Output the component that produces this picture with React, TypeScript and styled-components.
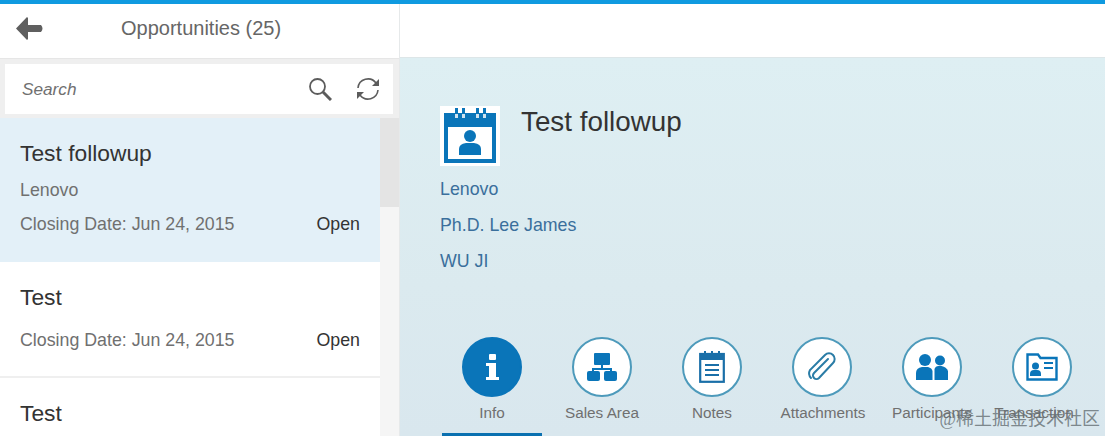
import React from "react";
import styled, { createGlobalStyle } from "styled-components";

const Global = createGlobalStyle`
  html, body { margin: 0; padding: 0; background: #fff; overflow: hidden; }
  body { font-family: "Liberation Sans", Arial, sans-serif; }
`;
const Page = styled.div`
  position: relative; width: 1105px; height: 436px; overflow: hidden;
  border-top: 4px solid #0f9ae0; box-sizing: border-box;
  display: grid; grid-template-columns: 400px 1fr;
`;
const Left = styled.aside`
  display: flex; flex-direction: column; border-right: 1px solid #e6e9ea; box-sizing: border-box; min-height: 0;
  overflow: hidden; background: #fff;
`;
const Header = styled.header`
  height: 54px; flex: none; display: flex; align-items: center; box-sizing: border-box; padding: 0 0 5px 15px;
`;
const Title = styled.h1`
  margin: 0 0 0 77px; font-size: 20px; font-weight: 400; color: #666;
`;
const SearchWrap = styled.div`
  flex: none; height: 60px; padding: 5px 6px 4px 5px; box-sizing: border-box; background: #efefef;
  border-top: 1px solid #e6e6e6;
`;
const SearchBox = styled.div`
  height: 50px; background: #fff; display: flex; align-items: center; padding: 0 12px 0 17px; box-sizing: border-box; gap: 23px;
`;
const Placeholder = styled.span`
  font-size: 17.2px; font-style: italic; color: #707070; flex: 1;
`;
const ListArea = styled.div`
  flex: 1; display: grid; grid-template-columns: 380px 19px; min-height: 0;
`;
const List = styled.div`display: flex; flex-direction: column;`;
const Track = styled.div`background: #f5f5f5;`;
const Thumb = styled.div`height: 89px; background: #e4e4e4;`;
const Item = styled.div<{ $active?: boolean; $h: number }>`
  height: ${p => p.$h}px; flex: none; box-sizing: border-box; padding: 20px 20px 0;
  background: ${p => (p.$active ? "#e3f0f8" : "#fff")};
  border-bottom: 2px solid ${p => (p.$active ? "#e3f0f8" : "#efefef")};
`;
const ItemTitle = styled.div`font-size: 22.8px; line-height: 30px; color: #333;`;
const Sub = styled.div`font-size: 17.8px; line-height: 20px; color: #707070; margin-top: 12px;`;
const Row = styled.div<{ $mt: number }>`
  display: flex; justify-content: space-between; font-size: 17.8px; line-height: 20px; color: #707070; margin-top: ${p => p.$mt}px;
`;
const Status = styled.span`color: #333;`;
const Right = styled.main`display: flex; flex-direction: column; min-height: 0;`;
const RightTop = styled.div`height: 54px; flex: none; background: #fff; border-bottom: 1px solid #dde6e8; box-sizing: border-box;`;
const Detail = styled.div`
  flex: 1; background: linear-gradient(180deg, #deeff3 0%, #dbeaef 60%, #d9e7ee 100%);
  padding: 48px 0 0 40px; box-sizing: border-box; display: flex; flex-direction: column; min-height: 0;
`;
const Head = styled.div`display: flex; gap: 21px; height: 60px;`;
const Logo = styled.div`
  width: 60px; height: 60px; background: #fff; display: flex; align-items: center; justify-content: center; flex: none;
`;
const DetailTitle = styled.h2`margin: -1px 0 0; font-size: 27.8px; line-height: 34px; font-weight: 400; color: #333;`;
const Links = styled.div`display: flex; flex-direction: column; gap: 16px; margin-top: 13px;`;
const LinkText = styled.a`font-size: 17.8px; line-height: 20px; color: #3a6f9c; text-decoration: none;`;
const Tabs = styled.nav`display: flex; margin: 66px 0 0 2px;`;
const Tab = styled.div<{ $active?: boolean }>`
  width: 110px; flex: none; display: flex; flex-direction: column; align-items: center; height: 99px; box-sizing: border-box;
  position: relative;
  ${p => p.$active ? "&::after{content:'';position:absolute;left:0;width:100px;bottom:0;height:3px;background:#0a70b0;}" : ""}
`;
const Circle = styled.div<{ $active?: boolean }>`
  width: 60px; height: 60px; border-radius: 50%; box-sizing: border-box; margin-left: -10px;
  display: flex; align-items: center; justify-content: center;
  background: ${p => (p.$active ? "#0a75b9" : "#fff")};
  border: 2px solid ${p => (p.$active ? "#0a75b9" : "#4d9abb")};
`;
const TabLabel = styled.span<{ $dx: number }>`
  font-size: 15.3px; line-height: 18px; margin: 7px 0 0 ${p => p.$dx}px; color: #707070; white-space: nowrap;
`;
const Watermark = styled.div`
  position: absolute; right: 5px; bottom: 6px; font-size: 18px; line-height: 22px; color: rgba(100,110,115,.8);
  font-family: "Liberation Serif", "Noto Sans CJK SC", serif; white-space: nowrap;
`;

const B = "#0a75b9";

const Back = () => (
  <svg width="29" height="23" viewBox="0 0 29 23"><path d="M12 0 L1 11.5 L12 23 L13 22 L13 15 L26 15 Q29 11.5 26 8 L13 8 L13 1 Z" fill="#5f5f5f" /></svg>
);
const Search = () => (
  <svg width="24" height="24" viewBox="0 0 24 24" fill="none" stroke="#5c5c5c"><circle cx="9.5" cy="9.5" r="7.5" strokeWidth="1.8" /><path d="M15 15 L23 23" strokeWidth="3" /></svg>
);
const Refresh = () => (
  <svg width="26" height="24" viewBox="0 0 26 24" fill="none" stroke="#5c5c5c" strokeWidth="1.6">
    <path d="M3 11 A10 10 0 0 1 21 6" /><path d="M23 13 A10 10 0 0 1 5 18" />
    <path d="M24 2 L24 9 L17 9 Z" fill="#5c5c5c" stroke="none" /><path d="M2 22 L2 15 L9 15 Z" fill="#5c5c5c" stroke="none" />
  </svg>
);
const CalendarPerson = () => (
  <svg width="52" height="56" viewBox="0 0 52 56">
    <rect x="0" y="5" width="52" height="50" fill={B} /><rect x="4" y="19" width="44" height="32" fill="#fff" />
    <path d="M11 0h3v10h-3zM18 0h3v10h-3zM32 0h3v10h-3zM39 0h3v10h-3z" fill={B} /><path d="M11 6h3v4h-3zM18 6h3v4h-3zM32 6h3v4h-3zM39 6h3v4h-3z" fill="#cfe3f0" />
    <circle cx="26" cy="28" r="6" fill={B} /><path d="M15 47 v-6 q0-5 7-6 h8 q7 1 7 6 v6 z" fill={B} />
  </svg>
);
const InfoIcon = () => (
  <svg width="14" height="26" viewBox="0 0 14 26" fill="#fff"><rect x="4" y="0" width="7" height="6" rx="1" /><path d="M1 9h10v14h3v3H1v-3h3V12H1z" /></svg>
);
const SalesIcon = () => (
  <svg width="30" height="28" viewBox="0 0 30 28" fill={B}>
    <rect x="7" y="0" width="16" height="12" rx="1" /><path d="M14 12h2v3h9v4h-2v-2H7v2H5v-4h9z" />
    <rect x="0" y="18" width="13" height="10" rx="2" /><rect x="17" y="18" width="13" height="10" rx="2" />
  </svg>
);
const NotesIcon = () => (
  <svg width="26" height="32" viewBox="0 0 26 32" fill="none">
    <rect x="1.2" y="3" width="23.6" height="27.8" stroke="#1a6fa8" strokeWidth="2.2" fill="#fff" /><rect x="1" y="3" width="24" height="6" fill="#1a6fa8" />
    <path d="M6 0v5M13 0v5M20 0v5" stroke="#1a6fa8" strokeWidth="2" /><path d="M6 14h14M6 19h14M6 24h14" stroke="#1a6fa8" strokeWidth="2" />
  </svg>
);
const ClipIcon = () => (
  <svg width="32" height="32" viewBox="0 0 32 32" fill="none" stroke="#2a7ca6" strokeWidth="2" strokeLinecap="round">
    <path d="M22 8 L8 22 a3.5 3.5 0 0 0 5 5 L27 12 a5.5 5.5 0 0 0-8-8 L4 19 a7 7 0 0 0 1 8" />
  </svg>
);
const PeopleIcon = () => (
  <svg width="32" height="26" viewBox="0 0 32 26" fill={B}>
    <circle cx="9" cy="6" r="6" /><path d="M0 26 v-7 q0-5 6-6 h6 q4 1 4.5 4 v9 z" />
    <circle cx="24" cy="6.5" r="5" /><path d="M18.5 26 V15 q1-3 4-3 h3 q5 1 6.5 5 v9 z" />
  </svg>
);
const CardIcon = () => (
  <svg width="32" height="28" viewBox="0 0 32 28" fill="none">
    <path d="M1.5 4 V1.5 H12 L14.5 5 H30.5 V26.5 H1.5 Z" stroke={B} strokeWidth="2.4" fill="#fff" />
    <circle cx="9.5" cy="13" r="3.5" fill={B} /><path d="M4 23 v-2 q0-4 4-4 h3 q4 0 4 4 v2 z" fill={B} />
    <path d="M18 10h9M18 15h9" stroke={B} strokeWidth="2" />
  </svg>
);

const tabs = [
  { label: "Info", icon: <InfoIcon />, active: true, dx: -10 },
  { label: "Sales Area", icon: <SalesIcon />, dx: -10 },
  { label: "Notes", icon: <NotesIcon />, dx: -10 },
  { label: "Attachments", icon: <ClipIcon />, dx: -8 },
  { label: "Participants", icon: <PeopleIcon />, dx: -10 },
  { label: "Transaction", icon: <CardIcon />, dx: -26 },
];

export default function App() {
  return (
    <Page>
      <Global />
      <Left>
        <Header><Back /><Title>Opportunities (25)</Title></Header>
        <SearchWrap>
          <SearchBox><Placeholder>Search</Placeholder><Search /><Refresh /></SearchBox>
        </SearchWrap>
        <ListArea>
          <List>
            <Item $active $h={144}>
              <ItemTitle>Test followup</ItemTitle>
              <Sub>Lenovo</Sub>
              <Row $mt={14}><span>Closing Date: Jun 24, 2015</span><Status>Open</Status></Row>
            </Item>
            <Item $h={116}>
              <ItemTitle>Test</ItemTitle>
              <Row $mt={18}><span>Closing Date: Jun 24, 2015</span><Status>Open</Status></Row>
            </Item>
            <Item $h={60}><ItemTitle>Test</ItemTitle></Item>
          </List>
          <Track><Thumb /></Track>
        </ListArea>
      </Left>
      <Right>
        <RightTop />
        <Detail>
          <Head><Logo><CalendarPerson /></Logo><DetailTitle>Test followup</DetailTitle></Head>
          <Links>
            <LinkText>Lenovo</LinkText>
            <LinkText>Ph.D. Lee James</LinkText>
            <LinkText>WU JI</LinkText>
          </Links>
          <Tabs>
            {tabs.map(t => (
              <Tab key={t.label} $active={t.active}>
                <Circle $active={t.active}>{t.icon}</Circle>
                <TabLabel $dx={t.dx}>{t.label}</TabLabel>
              </Tab>
            ))}
          </Tabs>
        </Detail>
      </Right>
      <Watermark>@稀土掘金技术社区</Watermark>
    </Page>
  );
}
